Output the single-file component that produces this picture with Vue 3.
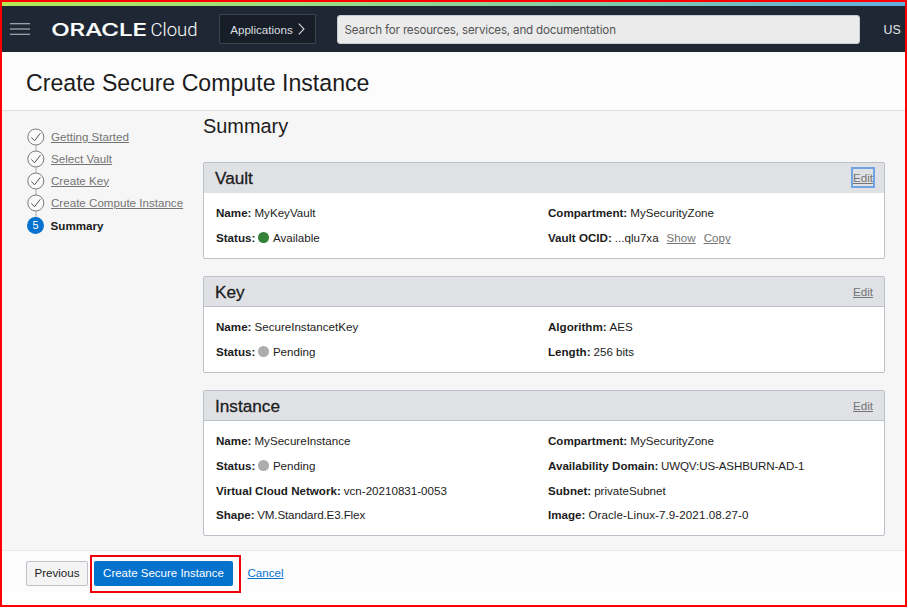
<script setup>
const steps = ['Getting Started', 'Select Vault', 'Create Key', 'Create Compute Instance']

const cards = [
  {
    title: 'Vault',
    focused: true,
    rows: [
      { label: 'Name:', value: 'MyKeyVault' },
      { label: 'Compartment:', value: 'MySecurityZone' },
      { label: 'Status:', value: 'Available', dot: 'green' },
      { label: 'Vault OCID:', value: '...qlu7xa', links: ['Show', 'Copy'] },
    ],
  },
  {
    title: 'Key',
    rows: [
      { label: 'Name:', value: 'SecureInstancetKey' },
      { label: 'Algorithm:', value: 'AES' },
      { label: 'Status:', value: 'Pending', dot: 'gray' },
      { label: 'Length:', value: '256 bits' },
    ],
  },
  {
    title: 'Instance',
    rows: [
      { label: 'Name:', value: 'MySecureInstance' },
      { label: 'Compartment:', value: 'MySecurityZone' },
      { label: 'Status:', value: 'Pending', dot: 'gray' },
      { label: 'Availability Domain:', value: 'UWQV:US-ASHBURN-AD-1', tight: true },
      { label: 'Virtual Cloud Network:', value: 'vcn-20210831-0053' },
      { label: 'Subnet:', value: 'privateSubnet' },
      { label: 'Shape:', value: 'VM.Standard.E3.Flex', tight: true },
      { label: 'Image:', value: 'Oracle-Linux-7.9-2021.08.27-0', loose: true },
    ],
  },
]
</script>

<template>
  <div class="page">
    <div class="accent"></div>
    <header class="topbar">
      <svg class="menu" width="20" height="12" viewBox="0 0 20 12">
        <path d="M0 .7H20M0 6H20M0 11.3H20" stroke="#c3c8cc" stroke-width="1.1" />
      </svg>
      <svg class="brand" width="148" height="30" viewBox="0 -5 148 30">
        <text class="oracle" x=".2" y="16.8" textLength="95.8" lengthAdjust="spacingAndGlyphs">ORACLE</text>
        <text class="cloud" x="99.5" y="16.8" textLength="47" lengthAdjust="spacingAndGlyphs">Cloud</text>
      </svg>
      <button class="apps">
        Applications
        <svg width="7" height="12" viewBox="0 0 7 12">
          <path d="M.8 .6L6 6L.8 11.4" fill="none" stroke="#d5d8da" stroke-width="1.1" />
        </svg>
      </button>
      <div class="search">Search for resources, services, and documentation</div>
      <span class="region">US</span>
    </header>

    <div class="titlebar"><h1>Create Secure Compute Instance</h1></div>

    <main class="content">
      <ol class="steps">
        <li v-for="s in steps" :key="s">
          <svg width="18" height="23" viewBox="0 0 18 23">
            <path d="M9 17.3V23" stroke="#aaa" stroke-width="1" />
            <circle cx="8.8" cy="9" r="8" fill="#fafafa" stroke="#6c6c6c" stroke-width=".9" />
            <path d="M4.4 9.4L7.5 12.8L13.4 5.2" fill="none" stroke="#555" stroke-width="1" />
          </svg>
          <a>{{ s }}</a>
        </li>
        <li class="current"><span class="num">5</span><b>Summary</b></li>
      </ol>

      <section class="summary">
        <h2>Summary</h2>
        <article v-for="c in cards" :key="c.title" class="card">
          <div class="card-head" :class="{ plain: c.focused }">
            <h3>{{ c.title }}</h3>
            <a :class="{ focus: c.focused }">Edit</a>
          </div>
          <div class="grid">
            <div v-for="r in c.rows" :key="r.label" class="row">
              <b>{{ r.label }}</b>
              <i v-if="r.dot" class="dot" :class="r.dot"></i>
              <span :class="{ tight: r.tight, loose: r.loose }">{{ r.value }}</span>
              <a v-for="l in r.links" :key="l">{{ l }}</a>
            </div>
          </div>
        </article>
      </section>
    </main>

    <footer class="actions">
      <button class="previous">Previous</button>
      <div class="highlight"><button class="primary">Create Secure Instance</button></div>
      <a class="cancel">Cancel</a>
    </footer>
  </div>
</template>

<style>
body {
  margin: 0;
  background: #fff;
}
</style>

<style scoped>
.page {
  box-sizing: border-box;
  width: 907px;
  height: 607px;
  border: 2px solid #f00;
  background: #fff;
  overflow: hidden;
  color: #1c1c1c;
  font: 11.6px 'Liberation Sans', sans-serif;
  white-space: nowrap;
}
h1, h2, h3 {
  margin: 0;
  font-weight: 400;
}
button {
  box-sizing: border-box;
  padding: 0;
  font: inherit;
}
a {
  color: #747474;
  text-decoration: underline;
  text-decoration-thickness: 1px;
  text-underline-offset: 1px;
}
.accent {
  height: 4px;
  background: linear-gradient(90deg, #b5e853 0%, #9add85 35%, #7fc8b0 70%, #62aee0 100%);
}
.topbar {
  display: flex;
  align-items: center;
  height: 46px;
  padding-left: 8px;
  background: #1e2733;
  color: #e6e8ea;
}
.menu {
  margin-right: 21px;
}
.brand {
  flex: none;
  margin-right: 20px;
  fill: #fff;
  overflow: visible;
}
.oracle {
  font: 500 17.6px Inter, sans-serif;
  stroke: #fff;
  stroke-width: 0.2px;
}
.cloud {
  font: 300 18.8px Roboto, sans-serif;
}
.apps {
  display: flex;
  flex: none;
  align-items: center;
  justify-content: center;
  gap: 5px;
  width: 97px;
  height: 30px;
  border: 1px solid #3c444d;
  border-radius: 1px;
  background: #171e27;
  color: #dcdfe1;
}
.search {
  box-sizing: border-box;
  flex: none;
  width: 523px;
  height: 29px;
  margin-left: 20.6px;
  padding-left: 7px;
  border: 1px solid #c7cbd3;
  border-radius: 3px;
  background: #ebebeb;
  color: #555;
  font: 11.6px/28px Inter, sans-serif;
  letter-spacing: -0.18px;
}
.region {
  margin-left: 24px;
  padding-top: 1px;
  font-size: 12.4px;
}
.titlebar {
  height: 58px;
  padding-left: 24px;
  border-bottom: 1px solid #dfdfdf;
  background: #fcfcfc;
}
h1 {
  font-size: 23.15px;
  line-height: 62px;
}
.content {
  display: flex;
  height: 439px;
  background: #f6f6f6;
}
.steps {
  width: 176px;
  margin: 0;
  padding: 16.5px 0 0 25px;
  list-style: none;
}
.steps li {
  display: flex;
  gap: 6px;
  height: 22.25px;
  line-height: 17.5px;
}
.steps svg {
  flex: none;
}
.num {
  width: 17px;
  height: 17px;
  margin-right: 0.6px;
  border-radius: 50%;
  background: #0572ce;
  color: #fff;
  font-size: 11px;
  line-height: 17px;
  text-align: center;
}
.summary {
  width: 682px;
}
h2 {
  height: 51px;
  font-size: 19.9px;
  line-height: 31px;
}
.card {
  box-sizing: border-box;
  margin-bottom: 17px;
  border: 1px solid #bcc0c8;
  border-radius: 2px;
  background: #fff;
}
.card-head {
  box-sizing: border-box;
  display: flex;
  align-items: center;
  justify-content: space-between;
  height: 30px;
  padding: 0 11px;
  border-bottom: 1px solid #bcc0c8;
  background: #e0e1e5;
}
.card-head.plain {
  border-color: #e0e1e5;
}
h3 {
  padding-top: 2px;
  font-size: 17.2px;
  -webkit-text-stroke: 0.3px #1c1c1c;
}
.card-head a.focus {
  padding: 2px 0;
  outline: 2px solid #70a4e4;
  outline-offset: 0;
}
.grid {
  display: grid;
  grid-template-columns: 332px 1fr;
  padding: 7.6px 12px 8px;
}
.row {
  display: flex;
  align-items: center;
  gap: 3px;
  height: 24.7px;
}
.row a {
  margin-left: 5px;
}
.tight {
  margin-left: -0.5px;
  letter-spacing: -0.12px;
}
.loose {
  letter-spacing: 0.08px;
}
.dot {
  width: 10.6px;
  height: 10.6px;
  margin-right: 1px;
  border-radius: 50%;
}
.green {
  background: #338237;
}
.gray {
  background: #adadad;
}
.actions {
  box-sizing: border-box;
  display: flex;
  align-items: center;
  height: 42px;
  padding: 4px 0 0 24px;
  border-top: 1px solid #e9e9e9;
  background: #fcfcfc;
}
.previous {
  width: 62px;
  height: 25px;
  padding-bottom: 2px;
  border: 1px solid #bfc2cb;
  border-radius: 2px;
  background: #f4f4f4;
  color: #1c1c1c;
}
.highlight {
  box-sizing: border-box;
  flex: none;
  width: 151px;
  height: 38px;
  margin-left: 2px;
  padding: 4px 2px;
  border: 2px solid #f0000b;
}
.primary {
  width: 139px;
  height: 25px;
  padding-bottom: 1px;
  border: 0;
  border-radius: 2px;
  background: #0572ce;
  color: #fff;
  font-size: 11.5px;
}
.cancel {
  margin-left: 6.5px;
  padding-bottom: 2px;
  color: #0572ce;
}
</style>
